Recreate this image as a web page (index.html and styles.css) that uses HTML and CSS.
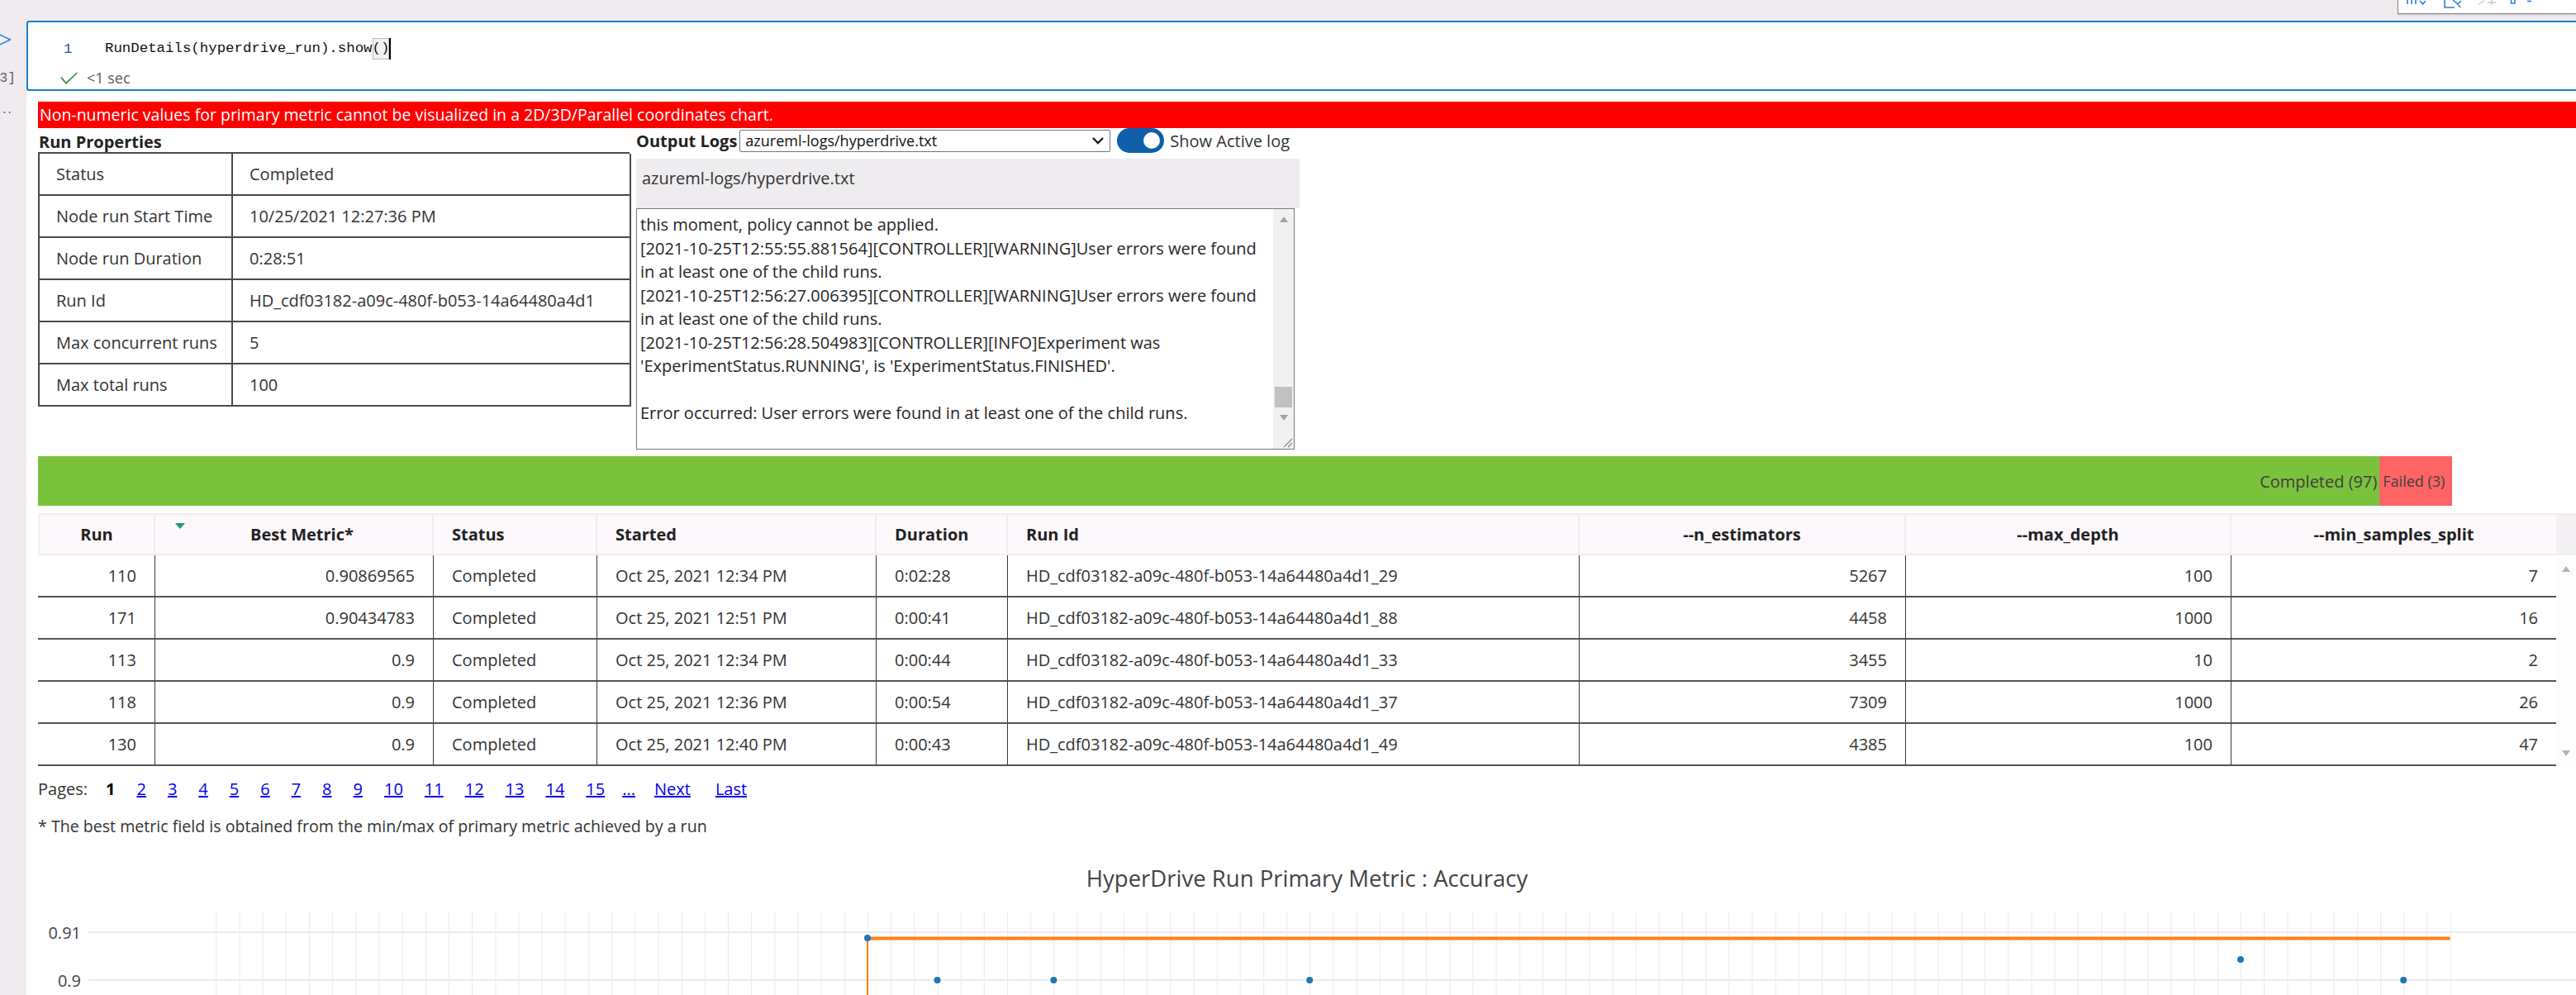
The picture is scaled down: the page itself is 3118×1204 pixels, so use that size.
FILE: index.html
```html
<!DOCTYPE html>
<html lang="en">
<head>
<meta charset="utf-8">
<title>RunDetails</title>
<link rel="stylesheet" href="styles.css">
</head>
<body>
<div class="page">
  <aside class="gutter">
    <svg class="runbtn" width="14" height="22" viewBox="0 0 14 22"><path d="M-9 1 L12.5 11 L-9 21 Z" fill="none" stroke="#3a86d6" stroke-width="1.6" stroke-linejoin="round"/></svg>
    <div class="exec">[3]</div>
    <div class="more">...</div>
  </aside>
  <main class="main">
    <div class="topstrip">
      <div class="cellbar">
        <svg width="216" height="16" viewBox="0 0 216 16">
          <g stroke="#2f7fd2" stroke-width="1.6" fill="none">
            <path d="M11 0 V5 M16 0 V5 M21 0 V5 M26 1 L29.5 5 L33 1"/>
            <path d="M56 0 V9 H68 M66 0 L72 5 L76 1 M70 3 L75 9"/>
            <path d="M136.5 0 V4 H141 V0"/>
            <path d="M156 1.5 H161"/>
          </g>
          <g stroke="#c9c9c9" stroke-width="1.4" fill="none">
            <path d="M97 5 L104 1 M108 3 H118 M113 0 V6"/>
          </g>
        </svg>
      </div>
    </div>
    <section class="cell">
      <div class="codeline">
        <span class="ln">1</span>
        <span class="code">RunDetails(hyperdrive_run).show<span class="match">()</span></span><span class="caret"></span>
      </div>
      <div class="status">
        <svg width="21" height="15" viewBox="0 0 21 15"><path d="M0.8 6.5 L7 13.8 L20.3 1" fill="none" stroke="#2e8b3a" stroke-width="1.7"/></svg>
        <span>&lt;1 sec</span>
      </div>
    </section>
    <section class="output">
      <div class="alert">Non-numeric values for primary metric cannot be visualized in a 2D/3D/Parallel coordinates chart.</div>
      <div class="panels">
        <div class="props">
          <div class="ptitle">Run Properties</div>
          <div class="ptable">
            <div class="pc">Status</div><div class="pc">Completed</div>
            <div class="pc">Node run Start Time</div><div class="pc">10/25/2021 12:27:36 PM</div>
            <div class="pc">Node run Duration</div><div class="pc">0:28:51</div>
            <div class="pc">Run Id</div><div class="pc">HD_cdf03182-a09c-480f-b053-14a64480a4d1</div>
            <div class="pc">Max concurrent runs</div><div class="pc">5</div>
            <div class="pc">Max total runs</div><div class="pc">100</div>
          </div>
        </div>
        <div class="logs">
          <div class="logbar">
            <span class="ptitle">Output Logs</span>
            <div class="select">
              <span>azureml-logs/hyperdrive.txt</span>
              <svg width="16" height="10" viewBox="0 0 16 10"><path d="M2 2 L8 8 L14 2" fill="none" stroke="#1a1a1a" stroke-width="2.4"/></svg>
            </div>
            <span class="toggle"><span class="knob"></span></span>
            <span class="tlabel">Show Active log</span>
          </div>
          <div class="loghead">azureml-logs/hyperdrive.txt</div>
          <div class="logbox">
            <div class="logtext">
              <div class="lline">this moment, policy cannot be applied.</div>
              <div class="lline">[2021-10-25T12:55:55.881564][CONTROLLER][WARNING]User errors were found</div>
              <div class="lline">in at least one of the child runs.</div>
              <div class="lline">[2021-10-25T12:56:27.006395][CONTROLLER][WARNING]User errors were found</div>
              <div class="lline">in at least one of the child runs.</div>
              <div class="lline">[2021-10-25T12:56:28.504983][CONTROLLER][INFO]Experiment was</div>
              <div class="lline">'ExperimentStatus.RUNNING', is 'ExperimentStatus.FINISHED'.</div>
              <div class="lline">&nbsp;</div>
              <div class="lline">Error occurred: User errors were found in at least one of the child runs.</div>
            </div>
            <div class="vscroll">
              <div class="sbtn"><svg width="10" height="7" viewBox="0 0 10 7"><path d="M5 0 L10 7 H0 Z" fill="#a3a3a3"/></svg></div>
              <div class="strack"><div class="sthumb"></div></div>
              <div class="sbtn"><svg width="10" height="7" viewBox="0 0 10 7"><path d="M0 0 H10 L5 7 Z" fill="#a3a3a3"/></svg></div>
              <div class="scorner"><svg width="14" height="14" viewBox="0 0 14 14"><path d="M13 3 L3 13 M13 8 L8 13" stroke="#8a8a8a" stroke-width="1.2"/></svg></div>
            </div>
          </div>
        </div>
      </div>

      <div class="progress">
        <div class="seg ok" style="width:97%">Completed (97)</div>
        <div class="seg fail" style="width:3%">Failed (3)</div>
      </div>

      <div class="runs">
        <div class="rgrid">
          <div class="rrow rhead">
            <div class="c ctr">Run</div>
            <div class="c ctr sort"><svg class="sortarrow" width="12" height="7" viewBox="0 0 12 7"><path d="M0 0 H12 L6 7 Z" fill="#1d9a6c"/></svg>Best Metric*</div>
            <div class="c">Status</div>
            <div class="c">Started</div>
            <div class="c">Duration</div>
            <div class="c">Run Id</div>
            <div class="c ctr">--n_estimators</div>
            <div class="c ctr">--max_depth</div>
            <div class="c ctr">--min_samples_split</div>
          </div>
          <div class="rrow rbody">
            <div class="c r">110</div><div class="c r">0.90869565</div><div class="c">Completed</div><div class="c">Oct 25, 2021 12:34 PM</div><div class="c">0:02:28</div><div class="c">HD_cdf03182-a09c-480f-b053-14a64480a4d1_29</div><div class="c r">5267</div><div class="c r">100</div><div class="c r">7</div>
          </div>
          <div class="rrow rbody">
            <div class="c r">171</div><div class="c r">0.90434783</div><div class="c">Completed</div><div class="c">Oct 25, 2021 12:51 PM</div><div class="c">0:00:41</div><div class="c">HD_cdf03182-a09c-480f-b053-14a64480a4d1_88</div><div class="c r">4458</div><div class="c r">1000</div><div class="c r">16</div>
          </div>
          <div class="rrow rbody">
            <div class="c r">113</div><div class="c r">0.9</div><div class="c">Completed</div><div class="c">Oct 25, 2021 12:34 PM</div><div class="c">0:00:44</div><div class="c">HD_cdf03182-a09c-480f-b053-14a64480a4d1_33</div><div class="c r">3455</div><div class="c r">10</div><div class="c r">2</div>
          </div>
          <div class="rrow rbody">
            <div class="c r">118</div><div class="c r">0.9</div><div class="c">Completed</div><div class="c">Oct 25, 2021 12:36 PM</div><div class="c">0:00:54</div><div class="c">HD_cdf03182-a09c-480f-b053-14a64480a4d1_37</div><div class="c r">7309</div><div class="c r">1000</div><div class="c r">26</div>
          </div>
          <div class="rrow rbody">
            <div class="c r">130</div><div class="c r">0.9</div><div class="c">Completed</div><div class="c">Oct 25, 2021 12:40 PM</div><div class="c">0:00:43</div><div class="c">HD_cdf03182-a09c-480f-b053-14a64480a4d1_49</div><div class="c r">4385</div><div class="c r">100</div><div class="c r">47</div>
          </div>
        </div>
        <div class="rscroll">
          <div class="rcap"></div>
          <div class="rtrack">
            <svg width="10" height="7" viewBox="0 0 10 7"><path d="M5 0 L10 7 H0 Z" fill="#b3b3b3"/></svg>
            <svg width="10" height="7" viewBox="0 0 10 7"><path d="M0 0 H10 L5 7 Z" fill="#b3b3b3"/></svg>
          </div>
        </div>
      </div>

      <div class="pages">
        <span class="plabel">Pages:</span>
        <b>1</b>
        <a href="#">2</a><a href="#">3</a><a href="#">4</a><a href="#">5</a><a href="#">6</a><a href="#">7</a><a href="#">8</a><a href="#">9</a><a href="#">10</a><a href="#">11</a><a href="#">12</a><a href="#">13</a><a href="#">14</a><a href="#">15</a>
        <a class="ell" href="#">...</a><a class="nx" href="#">Next</a><a class="ls" href="#">Last</a>
      </div>
      <p class="note">* The best metric field is obtained from the min/max of primary metric achieved by a run</p>

      <div class="chart">
        <div class="ctitle">HyperDrive Run Primary Metric : Accuracy</div>
        <svg class="plot" width="3072" height="200" viewBox="0 0 3072 200">
          <defs>
            <pattern id="vgrid" x="215.2" y="0" width="28.17" height="200" patternUnits="userSpaceOnUse">
              <rect x="0" y="0" width="1.2" height="200" fill="#ececec"/>
            </pattern>
          </defs>
          <rect x="215" y="21" width="2706" height="179" fill="url(#vgrid)"/>
          <rect x="61" y="46" width="3011" height="2" fill="#ebebeb"/>
          <rect x="61" y="104" width="3011" height="2" fill="#ebebeb"/>
          <text x="52" y="47" class="ylab">0.91</text>
          <text x="52" y="105" class="ylab">0.9</text>
          <path d="M1004 54.5 H2919.5" stroke="#ff7f0e" stroke-width="4" fill="none"/>
          <path d="M1004 54 V200" stroke="#ff7f0e" stroke-width="2" fill="none"/>
          <g fill="#1f77b4">
            <circle cx="1004" cy="54" r="4"/>
            <circle cx="1088.5" cy="105" r="4"/>
            <circle cx="1229.4" cy="105" r="4"/>
            <circle cx="1539.2" cy="105" r="4"/>
            <circle cx="2666" cy="80" r="4"/>
            <circle cx="2863.2" cy="105" r="4"/>
          </g>
        </svg>
      </div>
    </section>
  </main>
</div>
</body>
</html>
```

FILE: styles.css
```css
* { box-sizing: border-box; }

html, body {
  margin: 0;
  padding: 0;
}

body {
  width: 3118px;
  height: 1204px;
  overflow: hidden;
  background: #efebef;
  font-family: "Open Sans", "Noto Sans", sans-serif;
  font-size: 20px;
  color: #333;
}

.page {
  display: flex;
  height: 1204px;
}

/* ---------- left gutter ---------- */
.gutter {
  width: 32px;
  flex: none;
  display: flex;
  flex-direction: column;
  overflow: hidden;
  color: #5f5f5f;
}

.runbtn {
  display: block;
  margin-top: 37px;
}

.exec {
  margin-top: 26px;
  margin-left: -10px;
  height: 20px;
  line-height: 20px;
  font-family: "Liberation Mono", monospace;
  font-size: 16px;
  white-space: nowrap;
}

.more {
  margin-top: 16px;
  margin-left: -3px;
  height: 20px;
  line-height: 20px;
  font-size: 16px;
  letter-spacing: 2px;
}

/* ---------- main column ---------- */
.main {
  flex: 1;
  min-width: 0;
  display: flex;
  flex-direction: column;
}

.topstrip {
  height: 25px;
  flex: none;
  display: flex;
  justify-content: flex-end;
  align-items: flex-start;
}

.cellbar {
  width: 216px;
  height: 18px;
  margin-top: -1px;
  background: #fff;
  border: 1px solid #8a8a8a;
  border-right: none;
  box-shadow: 0 1px 2px rgba(0, 0, 0, 0.18);
}

.cellbar svg { display: block; }

/* ---------- code cell ---------- */
.cell {
  height: 85px;
  flex: none;
  background: #fff;
  border: 2px solid #1b7fd4;
  border-right: none;
  border-radius: 3px 0 0 3px;
  padding-top: 18px;
}

.codeline {
  display: flex;
  align-items: center;
  height: 28px;
  font-family: "Liberation Mono", monospace;
  font-size: 17.4px;
  color: #111;
  white-space: nowrap;
}

.ln {
  width: 93px;
  padding-left: 43px;
  color: #2b4f9a;
}

.match {
  display: inline-block;
  height: 26px;
  line-height: 26px;
  background: #f1f1f1;
  box-shadow: inset 0 0 0 1px #bcbcbc;
}

.caret {
  display: inline-block;
  width: 2px;
  height: 26px;
  background: #000;
}

.status {
  margin-top: 9px;
  height: 24px;
  display: flex;
  align-items: center;
  gap: 11px;
  padding-left: 39px;
  font-size: 18px;
  color: #5a5a5a;
}

/* ---------- output ---------- */
.output {
  flex: 1;
  background: #fff;
  padding: 13px 0 0 14px;
}

.alert {
  height: 32px;
  line-height: 32px;
  padding-left: 2px;
  background: #ff0000;
  color: #fff;
  font-size: 19.5px;
  white-space: nowrap;
}

.panels {
  display: flex;
  align-items: flex-start;
  gap: 8px;
}

.props { width: 716px; flex: none; }

.ptitle {
  font-weight: 700;
  color: #222;
  white-space: nowrap;
}

.props > .ptitle {
  height: 29px;
  line-height: 33px;
  padding-left: 1px;
}

.ptable {
  display: grid;
  grid-template-columns: 234px 482px;
  border-top: 2px solid #4a4a4a;
  border-left: 2px solid #4a4a4a;
}

.pc {
  height: 51px;
  display: flex;
  align-items: center;
  padding-left: 20px;
  border-right: 2px solid #4a4a4a;
  border-bottom: 2px solid #4a4a4a;
  white-space: nowrap;
}

.logs { width: 803px; flex: none; }

.logbar {
  height: 30px;
  display: flex;
  align-items: center;
  white-space: nowrap;
}

.select {
  width: 449px;
  height: 27px;
  margin-left: 3px;
  display: flex;
  align-items: center;
  justify-content: space-between;
  padding: 0 6px 0 6px;
  border: 1px solid #767676;
  border-radius: 2px;
  font-size: 18px;
  color: #111;
  background: #fff;
}

.toggle {
  width: 57px;
  height: 30px;
  margin-left: 8px;
  border-radius: 15px;
  background: #0f5fab;
  display: flex;
  align-items: center;
  justify-content: flex-end;
  padding-right: 5px;
}

.knob {
  width: 20px;
  height: 20px;
  border-radius: 50%;
  background: #fff;
}

.tlabel {
  margin-left: 7px;
  color: #333;
}

.loghead {
  margin-top: 7px;
  height: 60px;
  background: #eeecef;
  padding: 10px 7px 0;
  line-height: 28px;
  color: #333;
}

.logbox {
  width: 797px;
  height: 292px;
  display: flex;
  border: 1px solid #7a7a7a;
  background: #fff;
}

.logtext {
  flex: 1;
  min-width: 0;
  overflow: hidden;
  padding: 5px 0 0 4px;
  line-height: 28.5px;
  color: #262626;
}

.lline {
  height: 28.5px;
  white-space: pre;
}

.vscroll {
  width: 25px;
  flex: none;
  display: flex;
  flex-direction: column;
  background: #f1f1f1;
}

.sbtn {
  height: 25px;
  display: flex;
  align-items: center;
  justify-content: center;
}

.strack {
  flex: 1;
  display: flex;
  flex-direction: column;
  justify-content: flex-end;
  padding: 0 2px;
}

.sthumb {
  height: 25px;
  background: #c1c1c1;
}

.scorner {
  height: 25px;
  display: flex;
  align-items: flex-end;
  justify-content: flex-end;
  padding: 0 1px 1px 0;
}

/* ---------- progress ---------- */
.progress {
  width: 2922px;
  height: 60px;
  margin-top: 8px;
  display: flex;
}

.seg {
  height: 60px;
  display: flex;
  align-items: center;
  color: #404040;
  white-space: nowrap;
}

.seg.ok {
  background: #7bc23c;
  justify-content: flex-end;
  padding-right: 3px;
}

.seg.fail {
  background: #ff6464;
  padding-left: 4px;
  font-size: 18px;
}

/* ---------- runs grid ---------- */
.runs {
  display: flex;
  width: 3072px;
  margin-top: 9px;
}

.rgrid { width: 3048px; flex: none; }

.rrow {
  display: grid;
  grid-template-columns: 142px 337px 198px 338px 159px 692px 395px 394px 393px;
  height: 51px;
}

.c {
  display: flex;
  align-items: center;
  padding: 0 22px;
  white-space: nowrap;
  min-width: 0;
}

.c.r { justify-content: flex-end; }
.c.ctr { justify-content: center; }

.rhead .c {
  background: #fcf8fc;
  border-top: 2px solid #f0ecf0;
  border-bottom: 2px solid #f0ecf0;
  border-right: 2px solid #efebef;
  font-weight: 700;
  color: #222;
}

.rhead .c:first-child { border-left: 2px solid #f0ecf0; }
.rhead .c:last-child { border-right: none; }

.rhead .sort {
  position: relative;
  padding-left: 42px;
}

.sortarrow {
  position: absolute;
  left: 24px;
  top: 10px;
}

.rbody .c {
  border-right: 1px solid #3a3a3a;
  border-bottom: 2px solid #555;
  color: #333;
}

.rbody .c:last-child { border-right: none; }

.rscroll {
  width: 24px;
  flex: none;
  display: flex;
  flex-direction: column;
}

.rcap {
  height: 51px;
  background: #f3f0f3;
  border-top: 2px solid #f0ecf0;
}

.rtrack {
  flex: 1;
  background: #fdfdfd;
  display: flex;
  flex-direction: column;
  align-items: center;
  justify-content: space-between;
  padding: 13px 0 12px;
}

/* ---------- pager & note ---------- */
.pages {
  display: flex;
  gap: 26px;
  height: 30px;
  line-height: 30px;
  margin-top: 13px;
  white-space: nowrap;
}

.plabel { margin-right: -4px; color: #333; }
.pages b { color: #000; }
.pages a { color: #0000ee; text-decoration: underline; }
.pages .ell { margin-left: -5px; }
.pages .nx { margin-left: -3px; }
.pages .ls { margin-left: 4px; }

.note {
  margin: 16px 0 0;
  height: 28px;
  line-height: 28px;
  font-size: 19.6px;
  color: #333;
  white-space: nowrap;
}

/* ---------- chart ---------- */
.ctitle {
  margin-top: 31px;
  height: 36px;
  line-height: 36px;
  text-align: center;
  font-size: 27.5px;
  color: #444;
}

.plot { display: block; }

.ylab {
  font-family: "Open Sans", "Noto Sans", sans-serif;
  font-size: 20px;
  fill: #444;
  text-anchor: end;
  dominant-baseline: central;
}
```
